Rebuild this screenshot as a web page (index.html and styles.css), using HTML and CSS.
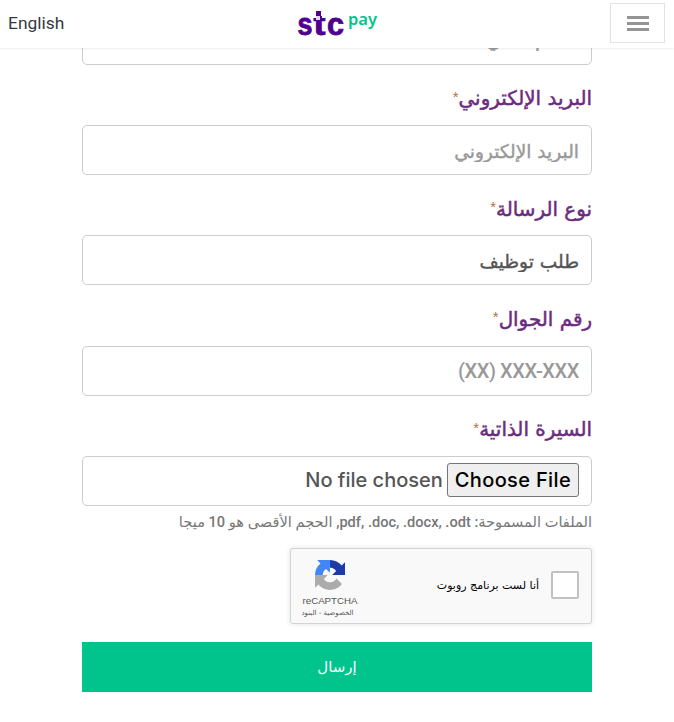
FILE: index.html
```
<!DOCTYPE html>
<html lang="ar" dir="rtl">
<head>
  <meta charset="UTF-8" />
  <meta name="viewport" content="width=device-width, initial-scale=1.0"/>
  <title>stc pay</title>
  <link rel="stylesheet" href="styles.css">
</head>
<body>
  <header class="navbar">
    <button class="menu-btn" type="button" aria-label="القائمة">
      <span class="bar"></span>
      <span class="bar"></span>
      <span class="bar"></span>
    </button>
    <svg class="logo" width="84" height="32" viewBox="0 0 84 32" direction="ltr">
      <g class="logo-stc">
        <text x="1.5" y="26.5" textLength="15" lengthAdjust="spacingAndGlyphs">s</text>
        <text x="17.5" y="26.5" textLength="12" lengthAdjust="spacingAndGlyphs">t</text>
        <text x="31" y="26.5" textLength="17" lengthAdjust="spacingAndGlyphs">c</text>
      </g>
      <rect x="17" y="0" width="12" height="10" fill="#fff"/>
      <rect x="20" y="3" width="5" height="5" fill="#4f008c"/>
      <rect x="20" y="8" width="4" height="4" fill="#e2d6ec"/>
      <rect x="24" y="8" width="2" height="5" fill="#4f008c"/>
      <text class="logo-pay" x="52" y="17" textLength="29" lengthAdjust="spacingAndGlyphs">pay</text>
    </svg>
    <a class="lang">English</a>
  </header>

  <form class="contact-form">
    <input class="field" type="text" placeholder="الاسم الثاني">

    <label class="label">البريد الإلكتروني<span class="required">*</span></label>
    <input class="field" type="email" placeholder="البريد الإلكتروني">

    <label class="label">نوع الرسالة<span class="required">*</span></label>
    <select class="field">
      <option>طلب توظيف</option>
    </select>

    <label class="label">رقم الجوال<span class="required">*</span></label>
    <input class="field phone" type="tel" dir="ltr" placeholder="(XX) XXX-XXX">

    <label class="label">السيرة الذاتية<span class="required">*</span></label>
    <input class="field file" type="file">
    <p class="hint">الملفات المسموحة: pdf, .doc, .docx, .odt, الحجم الأقصى هو 10 ميجا</p>

    <div class="captcha">
      <span class="captcha-box"></span>
      <span class="captcha-text">أنا لست برنامج روبوت</span>
      <div class="captcha-brand">
        <svg width="30" height="30" viewBox="0 0 64 64">
          <path fill="#1c3aa9" d="M64 31.955a33 33 0 0 0-.014-1.37V4.687l-7.16 7.16C50.967 4.674 42.033.093 32.035.093V16.261c.488 0 .865.057 1.142.164 5.007.395 9.346 3.158 11.9 7.168l-8.307 8.362z"/>
          <path fill="#4285f4" d="M31.862.094a33 33 0 0 0-1.37.015H4.594l7.16 7.16C4.58 13.127 0 22.06 0 32.06h16.26c0-.488.057-.865.164-1.142.395-5.007 3.158-9.346 7.168-11.9l8.307 8.307z"/>
          <path fill="#ababab" d="M0 32.06a33 33 0 0 0 .014 1.37v25.898l7.16-7.16c5.86 7.173 14.792 11.754 24.79 11.754 10.4 0 19.643-4.96 25.485-12.64L45.714 39.42a15.55 15.55 0 0 1-4.754 5.334c-2.05 1.6-4.952 2.906-8.993 2.906-.488 0-.865-.057-1.142-.164-5.007-.395-9.346-3.158-11.9-7.168l8.307-8.307z"/>
        </svg>
        <span class="captcha-name">reCAPTCHA</span>
        <span class="captcha-links">الخصوصية - البنود</span>
      </div>
    </div>

    <button class="submit-btn" type="submit">إرسال</button>
  </form>
</body>
</html>
```

FILE: styles.css
```
body {
  margin: 0;
  height: 722px;
  overflow: hidden;
  background: #fff;
  font-family: "DejaVu Sans", sans-serif;
}

.navbar {
  position: relative;
  z-index: 2;
  display: flex;
  align-items: flex-start;
  justify-content: space-between;
  height: 48px;
  padding: 0 9px 0 8px;
  box-sizing: border-box;
  background: #fff;
  box-shadow: 0 1px 2px rgba(0, 0, 0, 0.07);
}

.menu-btn {
  display: flex;
  flex-direction: column;
  align-items: center;
  justify-content: center;
  gap: 3px;
  width: 55px;
  height: 40px;
  margin-top: 3px;
  padding: 0;
  background: #fff;
  border: 1px solid #e3e3e3;
}

.bar {
  width: 22px;
  height: 3px;
  background: #959595;
}

.logo {
  margin-top: 8px;
}

.logo-stc {
  fill: #4f008c;
  stroke: #4f008c;
  stroke-width: 0.8;
  font: bold 31px "Liberation Sans", sans-serif;
}

.logo-pay {
  fill: #00c48c;
  font: 600 16px "Noto Sans", sans-serif;
}

.lang {
  width: 57px;
  margin-top: 12px;
  direction: ltr;
  color: #343a40;
  font: 17.4px/22px Roboto, sans-serif;
}

.contact-form {
  width: 510px;
  margin: -33.3px auto 0;
}

.field {
  display: block;
  width: 100%;
  height: 50px;
  box-sizing: border-box;
  padding: 2px 12px 0;
  background: #fff;
  border: 1px solid #ccc;
  border-radius: 5px;
  color: #555;
  font: 18.6px "DejaVu Sans", sans-serif;
  -webkit-text-stroke: 0.4px;
  appearance: none;
}

.field::placeholder {
  color: #999;
  opacity: 1;
}

.phone {
  padding-top: 0;
  text-align: right;
  font: 500 20px Roboto, sans-serif;
  letter-spacing: -0.4px;
  -webkit-text-stroke: 0;
}

.file {
  padding: 6px 12px;
  font: 500 20px/34px Inter, sans-serif;
  -webkit-text-stroke: 0;
}

.file::file-selector-button {
  height: 34px;
  margin: 0 0 0 4px;
  padding: 0 7px;
  background: #efefef;
  border: 1px solid #767676;
  border-radius: 3px;
  color: #000;
  font: 500 20px Inter, sans-serif;
  letter-spacing: 0.35px;
}

.label {
  display: flex;
  align-items: center;
  height: 60.33px;
  padding-top: 8px;
  box-sizing: border-box;
  color: #6b2c80;
  font-size: 19.9px;
  -webkit-text-stroke: 0.5px;
}

.required {
  align-self: flex-start;
  margin-top: 14px;
  color: #b5703f;
  font: 15px/20px "Liberation Sans", sans-serif;
  -webkit-text-stroke: 0;
}

.hint {
  height: 32px;
  margin: 0 0 10px;
  color: #777;
  font: 500 14.6px/32px Roboto, "DejaVu Sans", sans-serif;
  white-space: nowrap;
}

.captcha {
  display: flex;
  align-items: center;
  width: 302px;
  height: 76px;
  box-sizing: border-box;
  padding: 0 12px 2px 10px;
  background: #f9f9f9;
  border: 1px solid #d3d3d3;
  border-radius: 3px;
  box-shadow: 0 0 4px 1px rgba(0, 0, 0, 0.08);
}

.captcha-box {
  width: 28px;
  height: 28px;
  box-sizing: border-box;
  background: #fff;
  border: 2px solid #c1c1c1;
  border-radius: 2px;
}

.captcha-text {
  margin-right: 12px;
  font-size: 11px;
}

.captcha-brand {
  display: flex;
  flex-direction: column;
  align-items: center;
  width: 58px;
  margin: 9px auto 0 0;
  color: #555;
}

.captcha-name {
  margin-top: 5px;
  font: 9.7px/12px "Liberation Sans", sans-serif;
}

.captcha-links {
  margin-right: 5px;
  font-size: 7px;
  line-height: 12px;
  white-space: nowrap;
}

.submit-btn {
  display: block;
  width: 100%;
  height: 50px;
  margin-top: 18px;
  background: #00c48c;
  border: none;
  color: #fff;
  font: 15px "DejaVu Sans", sans-serif;
}
```
